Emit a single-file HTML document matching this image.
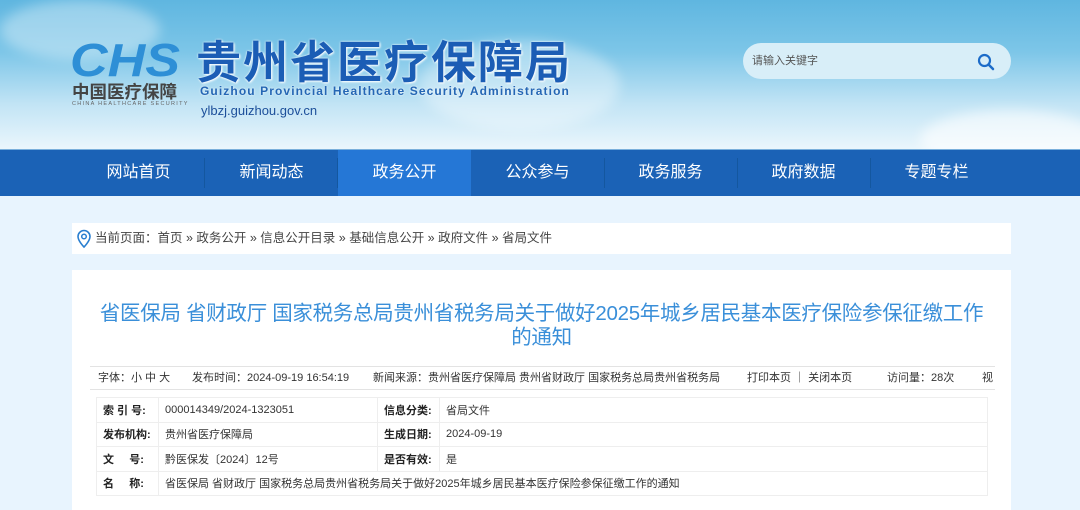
<!DOCTYPE html>
<html><head><meta charset="utf-8"><style>
*{margin:0;padding:0;box-sizing:border-box}
body{width:1080px;height:502px;overflow:hidden;background:#e8f4fe;font-family:"Liberation Sans","Noto Sans CJK SC",sans-serif;position:relative}
.hdr{position:absolute;left:0;top:0;width:1080px;height:149px;background:linear-gradient(180deg,#5fb6e0 0%,#7dc6e8 35%,#c2e4f5 70%,#eaf6fc 100%)}
.cloud{position:absolute;border-radius:50%;background:rgba(255,255,255,.35);filter:blur(6px)}
.nav{position:absolute;left:0;top:149px;width:1080px;height:47px;background:#1b62b6;border-top:1px solid #7ab0dc}
.nav div{position:absolute;top:0;width:133px;height:46px;line-height:46px;text-align:center;color:#fff;font-size:16px}
.nav .sep{width:1px;background:#14579f;top:8px;height:30px}
.a{background:#2577d6}
.crumb{position:absolute;left:72px;top:223px;width:939px;height:31px;background:#fff;font-size:12.5px;color:#444;line-height:31px;padding-left:23px}
.main{position:absolute;left:72px;top:270px;width:939px;height:240px;background:#fff}
.title{position:absolute;left:0;top:32px;width:939px;text-align:center;color:#3a8fd9;font-size:20.5px;line-height:24px;letter-spacing:-0.3px}
.meta{position:absolute;left:18px;top:96px;width:905px;height:24px;border-top:1px solid #e3e3e3;border-bottom:1px solid #e3e3e3;font-size:11px;color:#333;line-height:22px;white-space:nowrap}
.meta span{position:absolute}
table{position:absolute;left:24px;top:127px;width:892px;border-collapse:collapse;font-size:11px;color:#333}
td{border:1px solid #eee;height:24.5px;padding-left:6px}
td.k{font-weight:bold;width:62px;color:#222}
</style></head><body>
<div class="hdr">
<div class="cloud" style="left:420px;top:40px;width:200px;height:90px"></div>
<div class="cloud" style="left:920px;top:110px;width:180px;height:60px;background:rgba(255,255,255,.6)"></div>
<div class="cloud" style="left:0;top:0;width:160px;height:60px"></div>
<svg style="position:absolute;left:70px;top:38px" width="115" height="42"><text x="0" y="38" font-family="Liberation Sans" font-weight="bold" font-style="italic" font-size="46" fill="#2e8fd6" textLength="110" lengthAdjust="spacingAndGlyphs">CHS</text></svg>
<div style="position:absolute;left:72px;top:79px;font-size:17.5px;font-weight:bold;color:#444;letter-spacing:0px">中国医疗保障</div>
<div style="position:absolute;left:72px;top:101px;font-size:5.5px;color:#666;letter-spacing:1.3px">CHINA HEALTHCARE SECURITY</div>
<div style="position:absolute;left:196px;top:26px;font-size:45px;font-weight:bold;color:#1b5db5;letter-spacing:2px;text-shadow:0 0 2px #fff,1px 1px 2px #fff">贵州省医疗保障局</div>
<div style="position:absolute;left:200px;top:84px;font-size:12px;font-weight:bold;color:#2466b4;letter-spacing:1.1px;text-shadow:0 0 2px #fff">Guizhou Provincial Healthcare Security Administration</div>
<div style="position:absolute;left:201px;top:103px;font-size:13px;color:#1c4f9a">ylbzj.guizhou.gov.cn</div>
<div style="position:absolute;left:743px;top:43px;width:268px;height:36px;border-radius:18px;background:#d8eef8;font-size:11px;color:#555;line-height:36px;padding-left:9px">请输入关键字
<svg style="position:absolute;left:234px;top:10px" width="18" height="18"><circle cx="7.5" cy="7.5" r="5.5" fill="none" stroke="#1c6cc9" stroke-width="2.2"/><line x1="11.5" y1="11.5" x2="16" y2="16" stroke="#1c6cc9" stroke-width="2.5" stroke-linecap="round"/></svg></div>
</div>
<div class="nav">
<div style="left:72px">网站首页</div><div class="sep" style="left:204px"></div>
<div style="left:205px">新闻动态</div><div class="sep" style="left:337px"></div>
<div class="a" style="left:338px">政务公开</div>
<div style="left:471px">公众参与</div><div class="sep" style="left:604px"></div>
<div style="left:604px">政务服务</div><div class="sep" style="left:737px"></div>
<div style="left:737px">政府数据</div><div class="sep" style="left:870px"></div>
<div style="left:870px">专题专栏</div>
</div>
<div class="crumb"><svg style="position:absolute;left:4px;top:6px" width="16" height="20"><path d="M8 1.5a6 6 0 0 0-6 6c0 4.5 6 10.5 6 10.5s6-6 6-10.5a6 6 0 0 0-6-6z" fill="none" stroke="#2a7fd0" stroke-width="1.6"/><circle cx="8" cy="7.5" r="2.3" fill="none" stroke="#2a7fd0" stroke-width="1.5"/></svg>当前页面：首页 » 政务公开 » 信息公开目录 » 基础信息公开 » 政府文件 » 省局文件</div>
<div class="main">
<div class="title">省医保局 省财政厅 国家税务总局贵州省税务局关于做好2025年城乡居民基本医疗保险参保征缴工作<br>的通知</div>
<div class="meta"><span style="left:8px">字体：小 中 大</span><span style="left:102px">发布时间：2024-09-19 16:54:19</span><span style="left:283px">新闻来源：贵州省医疗保障局 贵州省财政厅 国家税务总局贵州省税务局</span><span style="left:657px">打印本页 ｜ 关闭本页</span><span style="left:797px">访问量：28次</span><span style="left:892px">视</span></div>
<table>
<tr><td class="k">索 引 号:</td><td style="width:219px">000014349/2024-1323051</td><td class="k">信息分类:</td><td>省局文件</td></tr>
<tr><td class="k">发布机构:</td><td>贵州省医疗保障局</td><td class="k">生成日期:</td><td>2024-09-19</td></tr>
<tr><td class="k">文 &nbsp; &nbsp; 号:</td><td>黔医保发〔2024〕12号</td><td class="k">是否有效:</td><td>是</td></tr>
<tr><td class="k">名 &nbsp; &nbsp; 称:</td><td colspan="3">省医保局 省财政厅 国家税务总局贵州省税务局关于做好2025年城乡居民基本医疗保险参保征缴工作的通知</td></tr>
</table>
</div>
</body></html>
